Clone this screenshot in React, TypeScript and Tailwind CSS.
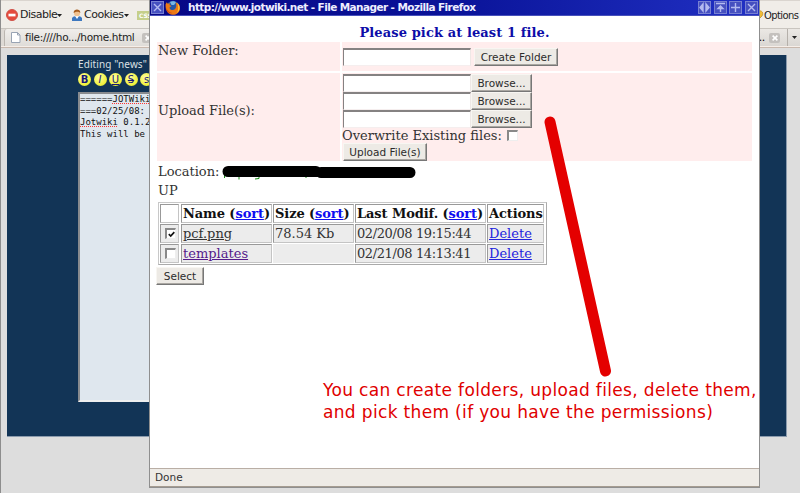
import type { ReactNode } from "react";

const serif = "font-['DejaVu_Serif','Liberation_Serif',serif]";
const sans = "font-['DejaVu_Sans','Liberation_Sans',sans-serif]";

function Button({ children, className = "" }: { children: ReactNode; className?: string }) {
  return (
    <button
      className={`${sans} flex h-[18px] shrink-0 items-center justify-center border border-t-[#f8f6f2] border-l-[#f8f6f2] border-r-[#777] border-b-[#777] bg-[#edeae5] text-[10.5px] leading-none whitespace-nowrap text-[#2c2c2c] shadow-[inset_-1px_-1px_#aaa7a2] ${className}`}
    >
      {children}
    </button>
  );
}

function TextBox() {
  return (
    <div className="h-[18px] w-[128px] shrink-0 border border-t-2 border-t-[#858282] border-l-[#858282] border-r-[#eee8e6] border-b-[#f5eeee] bg-white" />
  );
}

function Check({ on = false, className = "" }: { on?: boolean; className?: string }) {
  return (
    <div
      className={`flex h-[11px] w-[11px] shrink-0 items-center justify-center border border-t-2 border-l-2 border-t-[#898989] border-l-[#898989] border-r-[#eee] border-b-[#eee] bg-white ${className}`}
    >
      {on && (
        <svg width="7" height="7" viewBox="0 0 7 7" fill="none" stroke="#111" strokeWidth="1.7">
          <path d="M.8 3.2 2.7 5 6.3 1.2" />
        </svg>
      )}
    </div>
  );
}

function TitleButton({ d }: { d: string }) {
  return (
    <div className="flex h-[13px] w-[13px] shrink-0 items-center justify-center border border-[#7780d2] bg-[#4650c0]">
      <svg width="11" height="11" viewBox="0 0 11 11" fill="#b4baf0" stroke="#b4baf0" strokeWidth="1.4">
        <path d={d} />
      </svg>
    </div>
  );
}

function CloseGlyph() {
  return (
    <div className="flex h-[10px] w-[11px] shrink-0 items-center justify-center rounded-[2px] bg-[#c4c1be]">
      <svg width="6" height="6" viewBox="0 0 6 6" stroke="#fff" strokeWidth="1.6">
        <path d="M.6.6 5.4 5.4M5.4.6.6 5.4" />
      </svg>
    </div>
  );
}

function WikiButton({ children, className = "" }: { children: ReactNode; className?: string }) {
  return (
    <span
      className={`${sans} flex h-[13px] w-[13px] shrink-0 items-center justify-center rounded-full bg-[radial-gradient(circle_at_40%_35%,#ffffa0,#f0f03c_65%,#c4cf2a)] text-[10px] leading-none text-[#17177a] ${className}`}
    >
      {children}
    </span>
  );
}

function Firefox() {
  return (
    <svg className="shrink-0" width="16" height="16" viewBox="0 0 16 16">
      <circle cx="8" cy="7.4" r="6.7" fill="#2457a8" />
      <path d="M5 2c2-1.4 5-1 6 .5L9 5 6.5 5z" fill="#78b7e5" />
      <path d="M.6 4.2 1.8 2.3l1 1.5L5 3.3 4.5 5l2 1-2 1.4c.4 3 4 3.4 5.6 1.5 1.4-1.6 1.7-4 .4-6.6C14 3.6 15.6 6 15 9.2 14.2 13 11 15 7.5 14.7 3 14.3.2 10.5.6 4.2z" fill="#ec7815" />
      <path d="M12.2 2.4C15.6 6 15 11 11.5 13.2c2-2.6 2.4-6 .7-10.8z" fill="#ffc83a" />
      <path d="M1.4 8c1 3 3.1 4.7 6 5-3.8 1-5.9-1.6-6-5z" fill="#c83d12" />
    </svg>
  );
}

function Cell({ children, head = false, className = "" }: { children?: ReactNode; head?: boolean; className?: string }) {
  return (
    <div
      className={`flex h-[19px] items-center border border-t-[#999] border-l-[#999] border-r-[#c4c4c4] border-b-[#c4c4c4] pl-px whitespace-nowrap ${
        head ? "bg-white font-bold tracking-[-0.1px] text-[#111]" : "bg-[#ececec] text-[#333]"
      } ${className}`}
    >
      {children}
    </div>
  );
}

const Sort = () => (
  <>
    (<span className="text-[#0d0df0] underline">sort</span>)
  </>
);

function Browser() {
  return (
    <div className="flex h-full flex-col border-l border-[#8d8d8d]">
      <div className="flex h-[28px] items-center justify-between border-t border-[#dad5cf] bg-[#f0ede8] pt-px text-[11px] text-[#222]">
        <div className="flex items-center pl-[5px] font-['DejaVu_Sans',sans-serif]">
          <svg width="12" height="12" viewBox="0 0 12 12">
            <circle cx="6" cy="6" r="5.5" fill="#e54a3c" stroke="#cf5148" />
            <path d="M2.500 4.700h7v2.700h-7z" fill="#fff" />
          </svg>
          <span className="ml-[2px] w-[37px] tracking-[-0.5px]">Disable</span>
          <svg width="5" height="3" viewBox="0 0 5 3"><path d="M0 0h5L2.500 3z" fill="#222" /></svg>
          <svg className="ml-[9px]" width="12" height="13" viewBox="0 0 12 13">
            <path d="M1 12V9q1-2 5-2t5 2v3z" fill="#3e78bf" />
            <path d="m4 7 2 3 2-3z" fill="#fff" />
            <circle cx="6" cy="4.200" r="3" fill="#f2c28e" />
            <path d="M2.700 4C2-.7 10-.7 9.200 4 8 2.500 5.400 2 2.700 4z" fill="#a65b1c" />
          </svg>
          <span className="ml-px w-[40px] tracking-[-0.5px]">Cookies</span>
          <svg width="5" height="3" viewBox="0 0 5 3"><path d="M0 0h5L2.500 3z" fill="#222" /></svg>
          <span className="ml-[8px] flex h-[9px] w-[16px] items-center bg-[#c5cf8a] pl-[2px] text-[6px] font-bold text-white">CSS</span>
        </div>
        <div className="flex w-[42px] shrink-0 items-center whitespace-nowrap font-['DejaVu_Sans',sans-serif]">
          <svg className="shrink-0" width="6" height="10" viewBox="0 0 6 10">
            <path d="M0 1c4-1 6 2 4 5L1 9z" fill="#f2bd35" stroke="#b88a25" strokeWidth=".7" />
          </svg>
          <span className="text-[10px] tracking-[-0.6px]">Options</span>
        </div>
      </div>
      <div className="flex h-[18px] items-end justify-between border-t border-[#c9c5bf] bg-[#dedad5]">
        <div className="ml-[3px] flex h-[17px] w-[160px] items-center rounded-tl-[3px] border-l border-[#bbb6b0] bg-gradient-to-b from-[#f0eeeb] to-[#dfdcd8] pl-[6px] text-[10.5px] text-[#222]">
          <svg width="10" height="11" viewBox="0 0 10 11">
            <path d="M.5.5H6.500L9 3v7.500H.5z" fill="#fff" stroke="#98a3b3" />
            <path d="M6.500.5V3H9" fill="none" stroke="#98a3b3" />
          </svg>
          <span className="ml-[4px] w-[117px] whitespace-nowrap font-['DejaVu_Sans',sans-serif] tracking-[-0.32px]">file:////ho.../home.html</span>
          <CloseGlyph />
        </div>
        <div className="flex h-[17px] w-[42px] shrink-0 items-center bg-gradient-to-b from-[#ebe8e4] to-[#dad7d3] text-[11px]">
          <span className="w-[11px] pl-px">..</span>
          <CloseGlyph />
          <div className="ml-[7px] flex h-full flex-1 items-center justify-center border-l border-[#b5b0aa]">
            <svg width="5" height="3" viewBox="0 0 5 3"><path d="M0 0h5L2.500 3z" fill="#222" /></svg>
          </div>
        </div>
      </div>
      <div className="h-[2px] border-b border-[#c8b8ad] bg-[#f6eee8]" />
      <div className="flex-1 bg-[#ddd] pt-[7px] pl-[6px]">
        <div className="h-[382px] w-[780px] border-r border-b border-[#8b9bad] bg-[#123456] pl-[71px]">
          <div className="h-[17px] pt-[2px] font-['Noto_Sans',sans-serif] text-[10px] leading-[14px] tracking-[0.1px] whitespace-nowrap text-[#dbe0e4]">
            Editing "news"
          </div>
          <div className="flex h-[20px] gap-[2.5px] pt-px">
            <WikiButton className="font-bold">B</WikiButton>
            <WikiButton className="italic">I</WikiButton>
            <WikiButton className="underline">U</WikiButton>
            <WikiButton className="line-through">S</WikiButton>
            <WikiButton>s</WikiButton>
          </div>
          <div className="h-[310px] w-[500px] border-2 border-t-[#888b8f] border-l-[#888b8f] border-r-[#eee] border-b-[#eee] bg-[#dfe7ee] font-['DejaVu_Sans_Mono',monospace] text-[9px] leading-[11.7px] whitespace-pre text-[#111]">
            <div>======<u className="decoration-[#f33] decoration-dotted">JOTWiki</u></div>
            <div>===02/25/08:</div>
            <div><u className="decoration-[#f33] decoration-dotted">Jotwiki</u> 0.1.2</div>
            <div>This will be</div>
          </div>
        </div>
      </div>
    </div>
  );
}

function FileManager() {
  return (
    <div className="absolute top-0 left-[149px] flex h-[488px] w-[611px] flex-col border-r border-b border-l border-[#8f8f8f] bg-white">
      <div className="flex h-[16px] shrink-0 items-center border-b border-[#4750bb] bg-gradient-to-r from-[#070785] via-[#0a1399] to-[#2130c4]">
        <div className="ml-px"><TitleButton d="M2 2 9 9M9 2 2 9" /></div>
        <div className="ml-[1px]"><Firefox /></div>
        <span className={`${sans} ml-[7px] text-[10.5px] leading-none font-bold tracking-[-0.59px] whitespace-nowrap text-[#eef]`}>
          http://www.jotwiki.net - File Manager - Mozilla Firefox
        </span>
        <div className="mr-px ml-auto flex gap-[2.7px]">
          <TitleButton d="M4 2 1 5.500 4 9zM7 2v7l3-3.500z" />
          <TitleButton d="M1 1.500h9M5.500 4 3 6.500h5zM5.500 6v4" />
          <TitleButton d="M5.500 1v9M1 5.500h9" />
          <TitleButton d="M2 2 9 9M9 2 2 9" />
        </div>
      </div>

      <div className={`${serif} flex flex-1 flex-col pl-[7px] text-[13px] leading-[18px] text-[#333]`}>
        <div className="h-[26px] w-[595px] pt-[8px] text-center font-bold tracking-[0.1px] whitespace-nowrap text-[#0d0da8]">
          Please pick at least 1 file.
        </div>
        <div className="grid grid-cols-[183px_410px] grid-rows-[29px_88px] gap-[2px]">
          <div className="bg-[#ffeded] pl-px tracking-[-0.05px]">New Folder:</div>
          <div className="flex bg-[#ffeded] pt-[6px] pl-px">
            <TextBox />
            <Button className="ml-[3px] w-[84px]">Create Folder</Button>
          </div>
          <div className="flex items-center bg-[#ffeded] pb-[12px] pl-px tracking-[-0.05px]">Upload File(s):</div>
          <div className="bg-[#ffeded] pt-px">
            <div className="flex pl-px"><TextBox /><Button className="w-[61px]">Browse...</Button></div>
            <div className="flex pl-px"><TextBox /><Button className="w-[61px]">Browse...</Button></div>
            <div className="flex pl-px"><TextBox /><Button className="w-[61px]">Browse...</Button></div>
            <div className="flex h-[15px] items-center whitespace-nowrap">
              Overwrite Existing files:
              <Check className="ml-[5px]" />
            </div>
            <Button className="ml-px w-[84px]">Upload File(s)</Button>
          </div>
        </div>
        <div className="flex h-[19px] items-center pt-[3px] pl-px">
          <span className="w-[64px]">Location:</span>
          <svg width="196" height="15" viewBox="0 0 196 15">
            <path d="M2.500 10v3M15 11.500h4M17 11v3.500M37 11v2.500l-4 .5M84 10v3" fill="none" stroke="#168a16" />
            <path d="M6 6.500H94M99 7.500H188" stroke="#000" strokeWidth="11" strokeLinecap="round" />
          </svg>
        </div>
        <div className="h-[22px] pt-[2px] pl-px">UP</div>
        <div className="ml-px grid h-[63px] w-[389px] grid-cols-[20px_91px_81px_131px_57px] grid-rows-[19px_19px_19px] gap-x-px gap-y-px border border-t-[#c8c8c8] border-l-[#c8c8c8] border-r-[#aaa] border-b-[#aaa] p-px">
          <Cell head className="mr-px" />
          <Cell head>Name&nbsp;<Sort /></Cell>
          <Cell head>Size&nbsp;<Sort /></Cell>
          <Cell head>Last Modif.&nbsp;<Sort /></Cell>
          <Cell head>Actions</Cell>
          <Cell className="mr-px"><Check on className="ml-[3px]" /></Cell>
          <Cell><span className="underline">pcf.png</span></Cell>
          <Cell>78.54 Kb</Cell>
          <Cell><span className="tracking-[-0.4px]">02/20/08 19:15:44</span></Cell>
          <Cell><span className="text-[#2424dd] underline">Delete</span></Cell>
          <Cell className="mr-px"><Check className="ml-[3px]" /></Cell>
          <Cell><span className="text-[#551a8b] underline">templates</span></Cell>
          <div className="bg-[#ececec]" />
          <Cell><span className="tracking-[-0.4px]">02/21/08 14:13:41</span></Cell>
          <Cell><span className="text-[#2424dd] underline">Delete</span></Cell>
        </div>
        <Button className="mt-[2px] -ml-px w-[48px]">Select</Button>
      </div>

      <div className={`${sans} flex h-[19px] shrink-0 items-center border-t border-b border-t-[#b9aea5] border-b-[#a59c91] bg-[#eeebe6] pt-px pl-[5px] text-[10.5px] text-[#333]`}>
        Done
      </div>
    </div>
  );
}

export default function App() {
  return (
    <div className="relative h-[493px] w-[800px] overflow-hidden bg-[#ddd]">
      <Browser />
      <FileManager />
      <svg className="absolute top-[110px] left-[538px]" width="80" height="275" viewBox="0 0 80 275">
        <path d="M12 12 67.500 261" stroke="#e40000" strokeWidth="11" strokeLinecap="round" />
      </svg>
      <div className={`${sans} absolute top-[379px] left-[323px] text-[17px] leading-[22px] tracking-[0.34px] whitespace-nowrap text-[#df0000]`}>
        <div>You can create folders, upload files, delete them,</div>
        <div>and pick them (if you have the permissions)</div>
      </div>
    </div>
  );
}
